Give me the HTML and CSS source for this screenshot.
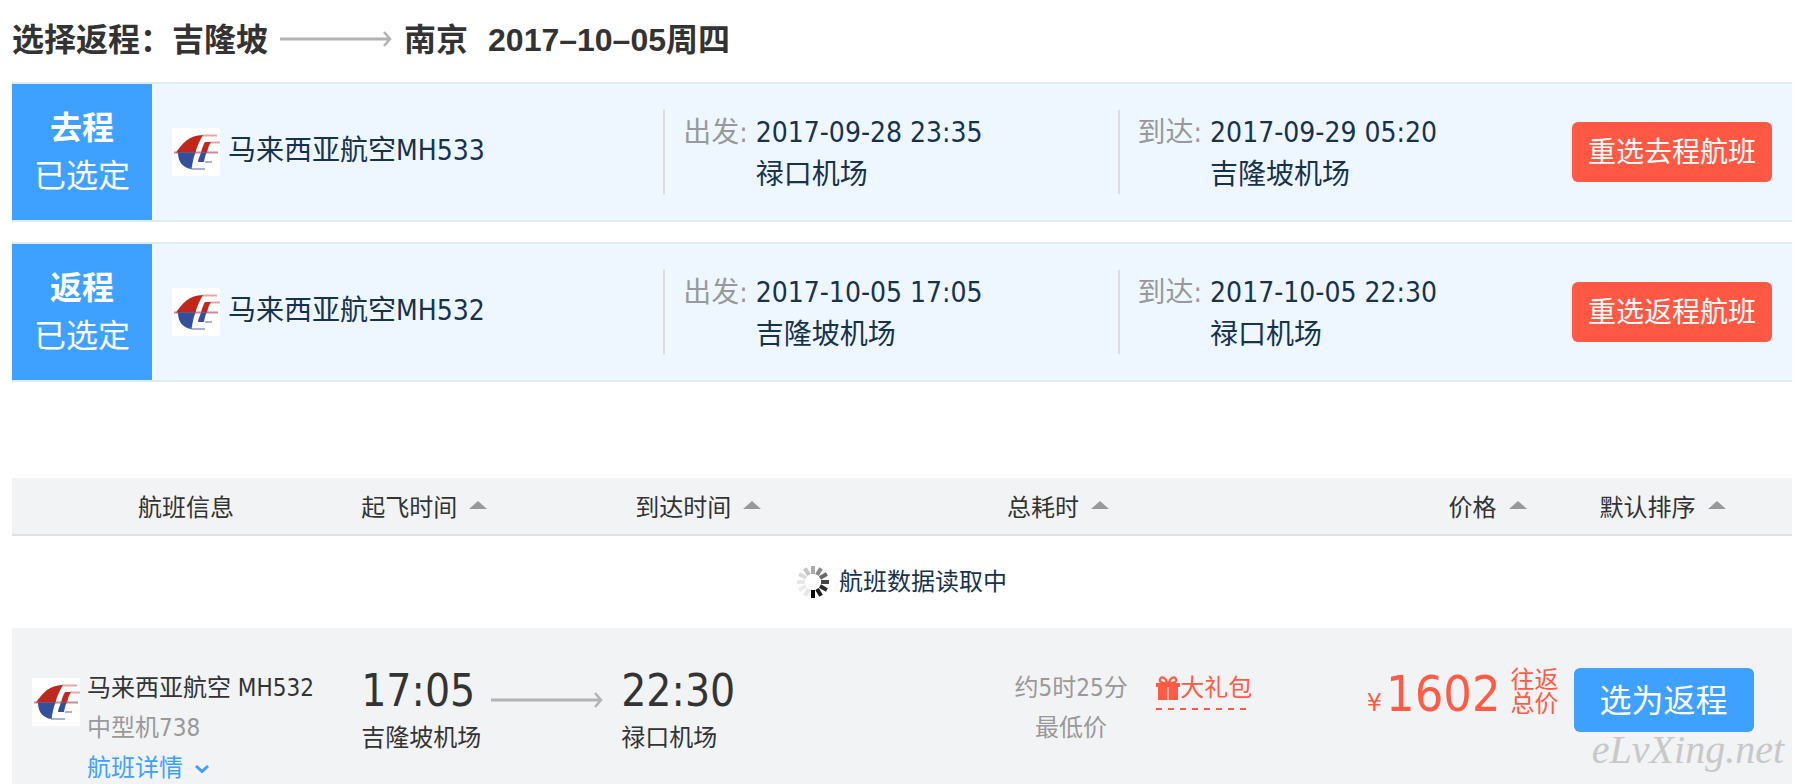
FILE: index.html
```html
<!DOCTYPE html>
<html lang="zh-CN">
<head>
    <meta charset="UTF-8">
    <meta name="viewport" content="width=device-width, initial-scale=1.0">
    <title>选择返程</title>
    <link rel="stylesheet" href="styles.css">
</head>
<body>
    <!-- shared icons -->
    <svg class="symbols" aria-hidden="true">
        <symbol id="logo" viewBox="0 0 48 48">
            <rect width="48" height="48" fill="#fff"/>
            <path d="M30 7.500h15M38 14.500h10" stroke="#e6a6a6" stroke-width="2"/>
            <path d="M33 34h7M19 41h14" stroke="#aab3d6" stroke-width="2"/>
            <path d="M2 24.500h44" stroke="#c98a98" stroke-width="2"/>
            <path d="M4 24.500C10 16 17 7 31 7C28 12 25 18 23.500 24.500z" fill="#c0281f"/>
            <path d="M6 24.500h17.500c-2 5-3 10-4 16.500C11 40 6 34 6 24.500z" fill="#34509a"/>
            <path d="M33 14h6c-2 3-3 6-4 10.500h-6c1-4 2-7 4-10.500z" fill="#c0281f"/>
            <path d="M29 24.500h5.500c-1 3-2 6-2.500 9.500h-6c0-3 2-6 3-9.500z" fill="#34509a"/>
        </symbol>
        <symbol id="arrow" viewBox="0 0 112 16">
            <path d="M0 8h110" stroke="#b3b3b3" stroke-width="3"/>
            <path d="M104 1l6 7-6 7" fill="none" stroke="#b3b3b3" stroke-width="2.500"/>
        </symbol>
    </svg>

    <h1 class="title">
        <span>选择返程：吉隆坡</span>
        <svg class="arrow"><use href="#arrow"/></svg>
        <span>南京</span>
        <span class="title-date">2017–10–05周四</span>
    </h1>

    <section class="picked">
        <div class="tag"><strong>去程</strong><span>已选定</span></div>
        <div class="airline"><svg class="logo"><use href="#logo"/></svg><span>马来西亚航空MH533</span></div>
        <div class="stop"><span class="label">出发:</span><div>2017-09-28 23:35<br>禄口机场</div></div>
        <div class="stop"><span class="label">到达:</span><div>2017-09-29 05:20<br>吉隆坡机场</div></div>
        <button type="button" class="btn btn-red">重选去程航班</button>
    </section>

    <section class="picked">
        <div class="tag"><strong>返程</strong><span>已选定</span></div>
        <div class="airline"><svg class="logo"><use href="#logo"/></svg><span>马来西亚航空MH532</span></div>
        <div class="stop"><span class="label">出发:</span><div>2017-10-05 17:05<br>吉隆坡机场</div></div>
        <div class="stop"><span class="label">到达:</span><div>2017-10-05 22:30<br>禄口机场</div></div>
        <button type="button" class="btn btn-red">重选返程航班</button>
    </section>

    <table class="flights">
        <thead>
            <tr>
                <th class="col-info">航班信息</th>
                <th class="col-dep"><button type="button" class="sort">起飞时间</button></th>
                <th class="col-arr"><button type="button" class="sort">到达时间</button></th>
                <th class="col-time"><button type="button" class="sort">总耗时</button></th>
                <th class="col-gift"></th>
                <th class="col-price"><button type="button" class="sort">价格</button></th>
                <th class="col-action"><button type="button" class="sort">默认排序</button></th>
            </tr>
        </thead>
        <tbody>
            <tr>
                <td colspan="7">
                    <div class="loading">
                        <svg class="spinner" viewBox="-16 -16 32 32" stroke-width="4">
                            <path d="M0 8v8" stroke="#000"/>
                            <path d="M0 8v8" stroke="#1c1c1c" transform="rotate(-30)"/>
                            <path d="M0 8v8" stroke="#2c2c2c" transform="rotate(-60)"/>
                            <path d="M0 8v8" stroke="#444" transform="rotate(-90)"/>
                            <path d="M0 8v8" stroke="#666" transform="rotate(-120)"/>
                            <path d="M0 8v8" stroke="#888" transform="rotate(-150)"/>
                            <path d="M0 8v8" stroke="#aaa" transform="rotate(180)"/>
                            <path d="M0 8v8" stroke="#c4c4c4" transform="rotate(150)"/>
                            <path d="M0 8v8" stroke="#dadada" transform="rotate(120)"/>
                            <path d="M0 8v8" stroke="#e8e8e8" transform="rotate(90)"/>
                            <path d="M0 8v8" stroke="#eaeaea" transform="rotate(60)"/>
                            <path d="M0 8v8" stroke="#e6e6e6" transform="rotate(30)"/>
                        </svg>
                        <span>航班数据读取中</span>
                    </div>
                </td>
            </tr>
            <tr class="flight">
                <td>
                    <div class="info">
                        <svg class="logo"><use href="#logo"/></svg>
                        <div>
                            <p>马来西亚航空 MH532</p>
                            <p class="muted">中型机738</p>
                            <a class="detail" href="#">航班详情<svg class="chevron" viewBox="0 0 14 8"><path d="M1 1l6 5.500L13 1" fill="none" stroke="#3ea1ff" stroke-width="3"/></svg></a>
                        </div>
                    </div>
                </td>
                <td>
                    <div class="depart">
                        <div><p class="clock">17:05</p><p class="airport">吉隆坡机场</p></div>
                        <svg class="arrow"><use href="#arrow"/></svg>
                    </div>
                </td>
                <td class="arrive"><p class="clock">22:30</p><p class="airport">禄口机场</p></td>
                <td class="duration"><p>约5时25分</p><p>最低价</p></td>
                <td class="gift-cell">
                    <a class="gift" href="#">
                        <svg class="gift-icon" viewBox="0 0 24 24">
                            <path d="M0 7h24v4H0zM2 11h9v13H2zM13 11h9v13h-9z" fill="#ff5b45"/>
                            <path d="M11 11h2v13h-2z" fill="#ffb3a8"/>
                            <path d="M11 7C5 7 3 5.500 4 3 5.500 0 10 1.500 11 7zM13 7c6 0 8-1.500 7-4C18.500 0 14 1.500 13 7z" fill="none" stroke="#ff5b45" stroke-width="2.200"/>
                        </svg>大礼包</a>
                </td>
                <td>
                    <div class="price">
                        <span class="yen">¥</span><span class="amount">1602</span>
                        <span class="total">往返<br>总价</span>
                    </div>
                </td>
                <td class="action">
                    <button type="button" class="btn btn-blue">选为返程</button>
                    <span class="watermark">eLvXing.net</span>
                </td>
            </tr>
        </tbody>
    </table>
</body>
</html>
```
FILE: styles.css
```css
body {
    margin: 0 2px 0 12px;
    height: 100vh;
    overflow: hidden;
    font-family: "DejaVu Sans Condensed", "Noto Sans CJK SC", sans-serif;
    font-size: 24px;
    color: #333;
    background-color: #fff;
}
p {
    margin: 0;
}
button {
    font-family: inherit;
    border: none;
    cursor: pointer;
}
a {
    text-decoration: none;
}
.symbols {
    display: none;
}
.logo {
    width: 48px;
    height: 48px;
    flex: none;
}
.arrow {
    width: 112px;
    height: 16px;
    flex: none;
}
.title {
    display: flex;
    align-items: center;
    gap: 12px;
    height: 78px;
    margin: 0 0 4px;
    font-family: "Liberation Sans", "Noto Sans CJK SC", sans-serif;
    font-size: 32px;
}
.title span {
    padding-bottom: 4px;
}
.title .title-date {
    margin-left: 8px;
}

/* selected flights */
.picked {
    display: grid;
    grid-template-columns: 140px 9fr 8fr 8fr 220px;
    align-items: center;
    height: 136px;
    margin-bottom: 20px;
    border-top: 2px solid #e3eaf1;
    border-bottom: 2px solid #e3eaf1;
    background-color: #eef7ff;
    color: #17324d;
    font-size: 28px;
    line-height: 42px;
}
.tag {
    display: flex;
    flex-direction: column;
    justify-content: center;
    align-self: stretch;
    text-align: center;
    background-color: #3ea1ff;
    color: #fff;
    font-size: 32px;
    line-height: 48px;
}
.airline {
    display: flex;
    align-items: center;
    gap: 8px;
    padding-left: 20px;
}
.airline span {
    padding-bottom: 2px;
}
.stop {
    display: flex;
    gap: 8px;
    height: 84px;
    padding: 2px 0 0 18px;
    box-sizing: border-box;
    border-left: 2px solid #ddd;
}
.label, .muted {
    color: #999;
}
.btn {
    padding: 0 0 4px;
    border-radius: 6px;
    color: #fff;
}
.btn-red {
    width: 200px;
    height: 60px;
    background-color: #ff5945;
    font-size: 28px;
}
.btn-blue {
    width: 180px;
    height: 64px;
    background-color: #3ea1ff;
    font-size: 32px;
}

/* flight list */
.flights {
    width: 100%;
    margin-top: 96px;
    border-collapse: collapse;
    table-layout: fixed;
}
.flights th {
    height: 57px;
    padding: 0 0 2px;
    box-sizing: border-box;
    border-bottom: 2px solid #dfe1e3;
    background-color: #f1f3f5;
    font-weight: normal;
    text-align: left;
}
.flights td {
    padding: 0;
    vertical-align: top;
}
.flights .col-info {
    width: 19%;
    padding-left: 126px;
}
.flights .col-dep {
    width: 15%;
    padding-left: 11px;
}
.flights .col-arr {
    width: 21%;
    padding-left: 18px;
}
.flights .col-time {
    width: 9%;
    padding-left: 16px;
}
.flights .col-gift {
    width: 8%;
}
.flights .col-price {
    width: 15%;
    padding-right: 34px;
    text-align: right;
}
.flights .col-action {
    width: 13%;
    padding-left: 39px;
}
.sort {
    display: inline-flex;
    align-items: center;
    gap: 12px;
    padding: 0;
    background: none;
    color: #333;
    font-size: 24px;
}
.sort::after {
    content: "";
    border: 9px solid transparent;
    border-top: none;
    border-bottom: 8px solid #999;
}
.loading {
    display: flex;
    justify-content: center;
    align-items: center;
    gap: 10px;
    height: 92px;
    color: #17324d;
}
.loading span {
    padding-bottom: 6px;
}
.spinner {
    width: 32px;
    height: 32px;
}
.flight {
    background-color: #f1f3f5;
    line-height: 40px;
}
.flights .flight td {
    padding-top: 40px;
}
.info {
    display: flex;
    gap: 7px;
    padding-left: 20px;
}
.info .logo {
    margin-top: 10px;
}
.detail {
    color: #3ea1ff;
}
.chevron {
    width: 14px;
    height: 8px;
    margin-left: 12px;
    vertical-align: middle;
}
.depart {
    display: flex;
    gap: 10px;
    padding-left: 11px;
}
.depart .arrow {
    margin-top: 24px;
}
.clock {
    font-size: 44px;
    line-height: 46px;
}
.airport {
    line-height: 48px;
}
.flights .arrive {
    padding-left: 4px;
}
.flights .duration {
    padding-top: 41px;
    color: #999;
    text-align: center;
}
.flights .gift-cell {
    padding-left: 5px;
}
.gift {
    display: inline-flex;
    align-items: center;
    padding-bottom: 2px;
    background: repeating-linear-gradient(90deg, #ff5b45 0 6px, transparent 6px 12px) left bottom / 100% 2px no-repeat;
    color: #ff5b45;
}
.gift-icon {
    width: 24px;
    height: 24px;
}
.price {
    display: flex;
    justify-content: flex-end;
    align-items: baseline;
    gap: 4px;
    padding-right: 2px;
    color: #ff5b45;
    line-height: 52px;
}
.yen {
    font-family: "DejaVu Sans", sans-serif;
}
.amount {
    font-size: 50px;
}
.total {
    margin-left: 6px;
    align-self: flex-start;
    line-height: 24px;
}
.flights .action {
    position: relative;
    padding-left: 13px;
}
.watermark {
    position: absolute;
    right: 8px;
    top: 102px;
    color: #c8c8c8;
    font-family: "Liberation Serif", serif;
    font-style: italic;
    font-size: 40px;
}
```
